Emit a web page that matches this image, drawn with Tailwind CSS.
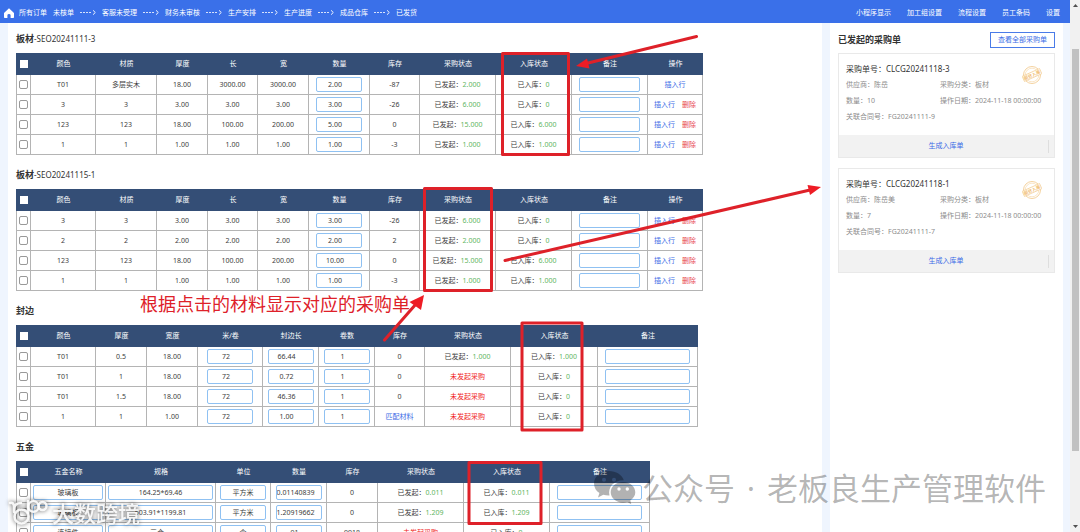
<!DOCTYPE html>
<html lang="zh-CN">
<head>
<meta charset="utf-8">
<meta name="viewport" content="width=device-width, initial-scale=1">
<title>采购单</title>
<script src="https://cdn.jsdelivr.net/npm/@tailwindcss/browser@4"></script>
</head>
<body class="relative flex h-screen overflow-hidden bg-[#eff5fe] font-['Noto_Sans','Noto_Sans_CJK_SC',sans-serif] text-[7px] leading-[10px] text-[#3c3c3c]">
<div class="flex min-w-0 flex-1 flex-col">
  <nav class="flex h-[23px] shrink-0 items-center justify-between bg-[#3a70e9] pt-[2px] pr-[10px] pl-1 text-white">
    <div id="steps" class="flex items-center gap-[6px] whitespace-nowrap">
      <a href="#" class="flex items-center gap-[5px]">
        <svg class="h-[10px] w-[10px]" viewBox="0 0 10 10" fill="#fff"><path d="M5 .3 10 5v4.200q0 .8-.8.8H6.600V7.300Q6.600 6 5 6T3.400 7.300V10H.8Q0 10 0 9.200V5z"/></svg>
        <span>所有订单</span>
      </a>
    </div>
    <div class="flex items-center gap-4 whitespace-nowrap">
      <a href="#">小程序显示</a><a href="#">加工组设置</a><a href="#">流程设置</a><a href="#">员工条码</a><a href="#">设置</a>
    </div>
  </nav>
  <div class="flex min-h-0 flex-1 gap-2 px-2 pr-[7px]">
    <main id="main" class="flex min-w-0 flex-1 flex-col gap-3 overflow-hidden bg-white pt-2 pl-2"></main>
    <aside class="w-[233px] shrink-0 bg-white px-2 pt-[9px]">
      <div class="mb-[5px] flex items-center justify-between">
        <h2 class="text-[9px] leading-[16px] font-bold text-[#333]">已发起的采购单</h2>
        <button class="h-4 w-[65px] border border-[#4a7be8] text-[#3a6de6]">查看全部采购单</button>
      </div>
      <div id="cards" class="flex flex-col gap-[10px]"></div>
    </aside>
  </div>
</div>
<div class="flex w-[10px] shrink-0 flex-col items-center justify-between bg-[#f1f1f1] py-1">
  <svg class="h-[3px] w-[5px]" viewBox="0 0 5 3"><path d="M0 3 2.500 0 5 3z" fill="#505050"/></svg>
  <div class="mt-[42px] mb-auto h-[402px] w-[7px] bg-[#c1c1c1]"></div>
  <svg class="h-[3px] w-[5px]" viewBox="0 0 5 3"><path d="M0 0 2.500 3 5 0z" fill="#505050"/></svg>
</div>

<!-- Annotation layer -->
<svg class="pointer-events-none absolute top-0 left-0 h-[532px] w-[1080px]" viewBox="0 0 1080 532">
  <g fill="none" stroke="#de2129" stroke-width="3" stroke-linejoin="round" stroke-linecap="round">
    <rect x="502.500" y="53.500" width="66" height="101"/>
    <rect x="424.500" y="188.500" width="67" height="102"/>
    <rect x="522" y="323" width="60" height="107"/>
    <rect x="469" y="462.500" width="72" height="61"/>
    <path d="M696.500 36.500 586 63.500M505 260.500 810 190M384.500 340 416 304"/>
  </g>
  <g fill="#ee1c25">
    <path d="M576 66 587 58.500 589.500 68.500z"/>
    <path d="M821 187 807.500 185 810 195z"/>
    <path d="M424 295 409.500 302 421 310z"/>
  </g>
</svg>
<p class="pointer-events-none absolute top-[292px] left-[140px] text-[18px] leading-[24px] whitespace-nowrap text-[#de2129]">根据点击的材料显示对应的采购单</p>

<!-- Account watermark -->
<div class="pointer-events-none absolute top-[468px] left-[593px] flex items-center text-[31px] leading-[40px] whitespace-nowrap text-black/30">
  <svg class="mr-[5px] h-[38px] w-[44px]" viewBox="0 0 44 38">
    <path fill="currentColor" fill-rule="evenodd" d="M16 2C7.500 2 1 7.500 1 14.500c0 4 2 7.300 5.400 9.500L5 28.500l5.300-2.700c2 .6 4 .9 6.200.8C14.500 18 21 11 30.800 11.200 29.200 5.800 23 2 16 2zM11 8.700a2 2 0 1 1 0 4 2 2 0 0 1 0-4zM21 8.700a2 2 0 1 1 0 4 2 2 0 0 1 0-4z"/>
    <path fill="currentColor" fill-rule="evenodd" d="M30 13c-7 0-12.300 4.600-12.300 10.300S23 33.700 30 33.700c1.500 0 3-.3 4.300-.7l4 2.300-1-3.800c3-2 5-4.900 5-8.200C42.300 17.600 37 13 30 13zM26 18.300a1.700 1.700 0 1 1 0 3.400 1.700 1.700 0 0 1 0-3.400zM34.300 18.300a1.700 1.700 0 1 1 0 3.400 1.700 1.700 0 0 1 0-3.400z"/>
  </svg>
  <span>公众号</span><span class="w-8 text-center">·</span><span>老板良生产管理软件</span>
</div>

<!-- Site watermark -->
<div class="pointer-events-none absolute top-[497px] left-[8px] flex items-center gap-1 text-[22px] leading-[32px] font-medium whitespace-nowrap text-white/90 drop-shadow-[0_0_2px_rgba(0,0,0,0.7)]">
  <svg class="h-[30px] w-[40px]" viewBox="0 0 40 30" fill="none" stroke="currentColor" stroke-width="2.500" stroke-linecap="round">
    <path d="M2 5q4-1 4 4v5M6 12q0-7 7-7"/>
    <circle cx="13.500" cy="18.500" r="7"/><path d="M20 15V3"/>
    <circle cx="25.500" cy="8.500" r="5.200"/><circle cx="34.500" cy="8" r="4"/>
  </svg>
  <span>大数跨境</span>
</div>

<script>
const stepArrow = '<svg class="h-[5px] w-4" viewBox="0 0 16 5" fill="none" stroke="#fff"><path d="M0 2.500h12" stroke-dasharray="2 1" stroke-width=".8"/><path d="M13 .3 15.300 2.500 13 4.700" stroke-width=".9"/></svg>';
document.getElementById('steps').insertAdjacentHTML('beforeend',
  ['未核单','客服未受理','财务未审核','生产安排','生产进度','成品仓库','已发货'].map(t => `<a href="#">${t}</a>`).join(stepArrow));

// Cell builders
const num = (v, label) => `<input aria-label="${label}" value="${v}" class="block mx-auto h-[15px] w-[46px] rounded-[2px] border border-[#8fc1f2] bg-white pr-2 pb-px text-center text-[7px]">`;
const long = (v, label) => `<input aria-label="${label}" value="${v}" class="block mx-auto h-[15px] w-[46px] rounded-[2px] border border-[#8fc1f2] bg-white pr-[6px] pb-px text-[7px]">`;
const full = (v, label) => `<div class="px-[2px]"><input aria-label="${label}" value="${v}" class="block h-[15px] w-full rounded-[2px] border border-[#8fc1f2] bg-white pb-px text-center text-[7px]"></div>`;
const unit = v => `<div class="px-1"><input aria-label="单位" value="${v}" class="block h-[15px] w-full rounded-[2px] border border-[#8fc1f2] bg-white pb-px text-center text-[7px]"></div>`;
const note = () => `<div class="px-[7px]"><input aria-label="备注" class="block h-[15px] w-full rounded-[2px] border border-[#8fc1f2] bg-white text-[7px]"></div>`;
const bought = v => `已发起：<span class="text-[#5fb65f]">${v}</span>`;
const stored = v => `已入库：<span class="text-[#5fb65f]">${v}</span>`;
const none = '<span class="text-[#f01818]">未发起采购</span>';
const add = '<a href="#" class="text-[#3b6be6]">插入行</a>';
const both = '<span class="flex justify-center gap-[7px]">' + add + '<a href="#" class="text-[#e8434f]">删除</a></span>';

const board = (c, m, t, l, w, q, s, b, i, op) => [c, m, t, l, w, num(q, '数量'), s, bought(b), stored(i), note(), op];
const boardHead = ['颜色','材质','厚度','长','宽','数量','库存','采购状态','入库状态','备注','操作'];
const boardCols = [15,65,61,51,50,51,61,50,76,76,76,55];
const edge = (c, t, w, m, l, n, s, b, i) => [c, t, w, num(m, '米/卷'), num(l, '封边长'), num(n, '卷数'), s, b, stored(i), note()];
const metal = (n, sp, u, q, s, b, i) => [full(n, '五金名称'), full(sp, '规格'), unit(u), q, s, b, stored(i), note()];

const sections = [
  { title: '板材', no: '-SEO20241111-3', cols: boardCols, head: boardHead, rows: [
    board('T01','多层实木','18.00','3000.00','3000.00','2.00','-87','2.000','0', add),
    board('3','3','3.00','3.00','3.00','3.00','-26','6.000','0', both),
    board('123','123','18.00','100.00','200.00','5.00','0','15.000','6.000', both),
    board('1','1','1.00','1.00','1.00','1.00','-3','1.000','1.000', both)] },
  { title: '板材', no: '-SEO20241115-1', cols: boardCols, head: boardHead, rows: [
    board('3','3','3.00','3.00','3.00','3.00','-26','6.000','0', both),
    board('2','2','2.00','2.00','2.00','2.00','2','2.000','0', both),
    board('123','123','18.00','100.00','200.00','10.00','0','15.000','6.000', both),
    board('1','1','1.00','1.00','1.00','1.00','-3','1.000','1.000', both)] },
  { title: '封边', no: '', cols: [15,65,51,51,65,56,56,50,86,87,100],
    head: ['颜色','厚度','宽度','米/卷','封边长','卷数','库存','采购状态','入库状态','备注'], rows: [
    edge('T01','0.5','18.00','72','66.44','1','0', bought('1.000'),'1.000'),
    edge('T01','1','18.00','72','0.72','1','0', none,'0'),
    edge('T01','1.5','18.00','72','46.36','1','0', none,'0'),
    edge('1','1','1.00','72','1.00','1','<a href="#" class="text-[#3b6be6]">匹配材料</a>', none,'0')] },
  { title: '五金', no: '', cols: [15,75,110,55,56,51,86,86,100],
    head: ['五金名称','规格','单位','数量','库存','采购状态','入库状态','备注'], rows: [
    metal('玻璃板','164.25*69.46','平方米', long('0.011408395','数量'),'0', bought('0.011'),'0.011'),
    metal('玻璃板','503.91*1199.81','平方米', long('1.209196627','数量'),'0', bought('1.209'),'1.209'),
    metal('连接件','三合一','个', num('91','数量'),'9918', none,'0')] },
];
const box = '<input type="checkbox" aria-label="选择此行" class="mx-auto block h-[9px] w-[9px] appearance-none rounded-[2px] border border-[#999] bg-white">';
const boxAll = '<input type="checkbox" aria-label="全选" class="mx-auto block h-2 w-2 appearance-none bg-white">';
document.getElementById('main').innerHTML = sections.map(s => `
  <section>
    <h2 class="mb-[7px] text-[9px] leading-[15px] font-bold text-[#333]">${s.title}<span class="text-[8px] font-normal">${s.no}</span></h2>
    <table class="table-fixed border-separate border-spacing-0 text-center whitespace-nowrap" style="width:${s.cols.reduce((a, b) => a + b)}px">
      <colgroup>${s.cols.map(w => `<col style="width:${w}px">`).join('')}</colgroup>
      <thead><tr class="h-[22px] bg-[#344e76] text-white"><th class="p-0">${boxAll}</th>${s.head.map(h => `<th class="p-0 font-normal">${h}</th>`).join('')}</tr></thead>
      <tbody>${s.rows.map(r => `<tr class="h-5"><td class="border-x border-b border-[#b4b4b4] p-0">${box}</td>${r.map(c => `<td class="border-r border-b border-[#b4b4b4] p-0">${c}</td>`).join('')}</tr>`).join('')}</tbody>
    </table>
  </section>`).join('');

const stamp = '<svg class="absolute top-[11px] right-[12px] h-5 w-5" viewBox="0 0 20 20" fill="none" stroke="#f3cd94"><circle cx="10" cy="10" r="8.500" stroke-width=".9"/><circle cx="10" cy="10" r="6.800" stroke-width=".5"/><g transform="rotate(-24 10 10)"><path d="M.5 7.200h19v5.600H.5z" fill="#fff" stroke-width=".7"/><text x="10" y="11.800" font-size="4.500" font-weight="700" text-anchor="middle" fill="#efb96c" stroke="none">部分入库</text></g></svg>';
document.getElementById('cards').innerHTML = [
  ['CLCG20241118-3','陈岳','10','FG20241111-9'],
  ['CLCG20241118-1','陈岳美','7','FG20241111-7'],
].map(([no, who, qty, ref]) => `
  <article class="relative border border-[#e9e9e9]">
    ${stamp}
    <div class="px-[7px] pt-[7px] pb-[10px] leading-[16px] text-[#8c8c8c]">
      <h3 class="text-[8px] text-[#333]">采购单号：${no}</h3>
      <div class="grid grid-cols-[94px_1fr] whitespace-nowrap">
        <span>供应商：${who}</span><span>采购分类：板材</span>
        <span>数量：${qty}</span><span>操作日期：2024-11-18 00:00:00</span>
        <span>关联合同号：${ref}</span>
      </div>
    </div>
    <div class="flex h-[22px] items-center bg-[#f2f2f2] px-[5px]">
      <button class="h-[13px] flex-1 border-r border-[#dedede] text-[#3b6be6]">生成入库单</button>
    </div>
  </article>`).join('');
</script>
</body>
</html>
